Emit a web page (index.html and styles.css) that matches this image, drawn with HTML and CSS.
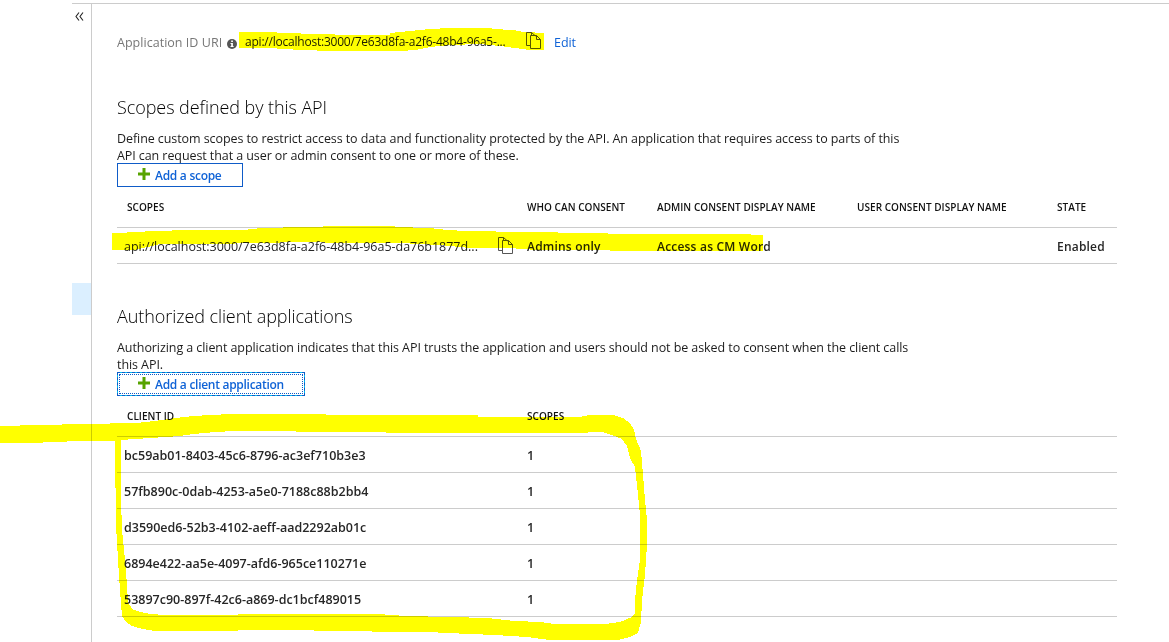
FILE: index.html
```html
<!DOCTYPE html>
<html lang="en">
<head>
<meta charset="utf-8">
<title>Expose an API</title>
<link rel="stylesheet" href="styles.css">
</head>
<body>
<div class="page">
  <aside class="rail">
    <button class="collapse" aria-label="Collapse menu"><svg width="9" height="9" viewBox="0 0 9 9"><path d="M4 .5 1 4.5l3 4M8 .5 5 4.5l3 4"/></svg></button>
    <div class="selected"></div>
  </aside>
  <main class="content">
    <div class="uri-row">
      <span class="label">Application ID URI</span>
      <svg class="info" width="10" height="10" viewBox="0 0 10 10"><circle cx="5" cy="5" r="5"/><path d="M4.2 1.5h1.7v1.4H4.2zM3.5 4h2.4v3h.7v1H3.5V7h.7V5h-.7z"/></svg>
      <span class="uri">api://localhost:3000/7e63d8fa-a2f6-48b4-96a5-...</span>
      <svg class="copy" width="16" height="18" viewBox="0 0 16 18"><path d="M4.5 13.5h-4V.5h5l4 3.500M5.500.5V4M4.500 3.500h6l4 4v9h-10zM10.500 3.500v4h4"/></svg>
      <a class="edit">Edit</a>
    </div>

    <section class="scopes">
      <h2 class="title-scopes">Scopes defined by this API</h2>
      <p class="desc-scopes">Define custom scopes to restrict access to data and functionality protected by the API. An application that requires access to parts of this<br>API can request that a user or admin consent to one or more of these.</p>
      <button class="add"><svg width="12" height="12" viewBox="0 0 12 12"><path d="M4.500 0h3v4.500H12v3H7.500V12h-3V7.500H0v-3h4.500z"/></svg><span>Add a scope</span></button>
      <div class="row head"><span>SCOPES</span><span>WHO CAN CONSENT</span><span>ADMIN CONSENT DISPLAY NAME</span><span>USER CONSENT DISPLAY NAME</span><span>STATE</span></div>
      <div class="row item">
        <span class="scope-cell"><span class="scope-uri">api://localhost:3000/7e63d8fa-a2f6-48b4-96a5-da76b1877d...</span><svg class="copy" width="16" height="18" viewBox="0 0 16 18"><path d="M4.500 13.500h-4V.5h5l4 3.500M5.500.5V4M4.500 3.500h6l4 4v9h-10zM10.500 3.500v4h4"/></svg></span>
        <span>Admins only</span><span>Access as CM Word</span><span></span><span>Enabled</span>
      </div>
    </section>

    <section class="clients">
      <h2 class="title-clients">Authorized client applications</h2>
      <p class="desc-clients">Authorizing a client application indicates that this API trusts the application and users should not be asked to consent when the client calls<br>this API.</p>
      <button class="add focused"><svg width="12" height="12" viewBox="0 0 12 12"><path d="M4.500 0h3v4.500H12v3H7.500V12h-3V7.500H0v-3h4.500z"/></svg><span>Add a client application</span></button>
      <div class="row head"><span>CLIENT ID</span><span>SCOPES</span></div>
      <div class="row item guid"><span>bc59ab01-8403-45c6-8796-ac3ef710b3e3</span><span>1</span></div>
      <div class="row item guid"><span>57fb890c-0dab-4253-a5e0-7188c88b2bb4</span><span>1</span></div>
      <div class="row item guid"><span>d3590ed6-52b3-4102-aeff-aad2292ab01c</span><span>1</span></div>
      <div class="row item guid"><span>6894e422-aa5e-4097-afd6-965ce110271e</span><span>1</span></div>
      <div class="row item guid"><span>53897c90-897f-42c6-a869-dc1bcf489015</span><span>1</span></div>
    </section>
  </main>
</div>
<svg class="marker" width="1169" height="642" viewBox="0 0 1169 642" shape-rendering="crispEdges">
  <path d="M239 32H277V33H301V34H335V35H390V33L410 31L430 29L450 28H492V29L513 30L524 32H535V33H544V50H530L515 48L500 46L480 44L450 45L430 47L415 50L400 51H317V50H293V49H277V48H239Z"/>
  <path d="M112 233H127V232H145V231H172V230H248V229L266 228L300 227L345 226H395V227L430 228L447 230L466 231H496V232H558V233H608V234H751V235H763V251H610V250H530V249H516V248H470L440 245L400 243H350L300 242L260 243L210 244H160L135 250H112Z"/>
  <path fill-rule="evenodd" d="M0 426L40 425L83 424L136 423L155 421L175 418L193 416L230 414H302L350 415H478V417H582V416L592 415H613L623 418L630 423L634 430L636 439L641 451L643 475L645 500L647 520V545L645 575L642 600L641 622L638 633L630 637L618 640H550L527 637L495 635L470 634L427 632H372V631H314V630H238V631H155L143 629L132 626L126 622L122 616L120 590L118 560L116 525V505L115 470V441L90 441L43 442V443H0ZM121 440L150 438L180 436L193 434L215 432L235 431H296V432H386V433H588V432H602L612 435L622 439L627 446L630 458L635 467L638 495L640 515V560L637 580L635 600V613L632 617L620 622L605 624H555L540 622L515 621L487 618L450 617L406 616L378 614H262L215 615H165L150 614L140 612L132 609L128 602L127 585L125 560L122 530L121 500Z"/>
</svg>
</body>
</html>
```
FILE: styles.css
```css
body {
  margin: 0;
  background: #fff;
  color: #1c1c1c;
  font: 12.5px/17px "Open Sans", "Noto Sans", sans-serif;
}
button { font: inherit; background: none; border: 0; padding: 0; }
h2, p { margin: 0; white-space: nowrap; }
.page {
  display: flex;
  box-sizing: border-box;
  width: 1097px;
  height: 639px;
  margin: 3px 0 0 72px;
  border-top: 1px solid #ccc;
  overflow: hidden;
}
.rail { width: 19px; border-right: 1px solid #ccc; }
.collapse { display: block; margin: 8px 0 0 3px; height: 9px; }
.collapse svg { display: block; fill: none; stroke: #222; stroke-width: 1.1; }
.selected { height: 32px; margin-top: 262px; background: #dbefff; }
.content { width: 1000px; margin-left: 25px; }
.uri-row { display: flex; align-items: center; height: 18px; margin-top: 29px; white-space: nowrap; }
.label { width: 110px; color: #777; letter-spacing: .03px; }
.info { fill: #555; margin-top: 3px; }
.info path { fill: #fff; }
.uri { width: 281px; margin: -1px 0 0 8px; letter-spacing: -.22px; font-size: 12px; }
.copy { fill: none; stroke: #555; flex: none; }
.uri-row .copy { margin-top: -2px; }
.edit { color: #0f62d6; margin-left: 12px; letter-spacing: -.05px; }
h2 { font-size: 18px; line-height: 24px; font-weight: 300; color: #000; }
.title-scopes { margin-top: 44px; letter-spacing: -.07px; }
.title-clients { margin-top: 40px; letter-spacing: -.08px; }
p { margin-top: 11px; }
.desc-scopes { letter-spacing: -.08px; }
.desc-clients { letter-spacing: -.075px; }
.add {
  position: relative;
  display: flex;
  align-items: center;
  gap: 5px;
  box-sizing: border-box;
  width: 126px;
  height: 24px;
  margin-top: -1px;
  padding-left: 20px;
  border: 1px solid #0f5cc8;
  color: #0f62d6;
  font-weight: 600;
  font-size: 12px;
  letter-spacing: -.28px;
  white-space: nowrap;
}
.add svg { fill: #57a300; margin-top: -3px; }
.focused { width: 188px; border-color: #00bcf2; outline: 1px dotted #0f5cc8; outline-offset: -3px; }
.focused::before { content: ""; position: absolute; inset: -1px; border: 1px dashed #0f5cc8; }
.row {
  display: grid;
  grid-template-columns: 403px 130px 200px 200px 60px;
  box-sizing: border-box;
  align-items: center;
  height: 36px;
  padding-left: 7px;
  border-bottom: 1px solid #ccc;
  white-space: nowrap;
}
.head { height: 41px; padding-top: 1px; font-size: 10px; font-weight: 600; letter-spacing: .04px; padding-left: 10px; grid-template-columns: 400px 130px 200px 200px 60px; color: #111; }
.item { font-weight: 600; font-size: 12px; letter-spacing: .2px; padding-top: 2px; color: #262626; }
.guid { font-size: 12.5px; letter-spacing: 0; }
.scope-cell { display: flex; align-items: center; }
.scope-cell .copy { margin-top: -2px; }
.scope-uri { width: 374px; font-weight: 400; font-size: 12.5px; letter-spacing: -.02px; }
.marker { position: absolute; left: 0; top: 0; fill: #ff0; mix-blend-mode: multiply; pointer-events: none; }
```
